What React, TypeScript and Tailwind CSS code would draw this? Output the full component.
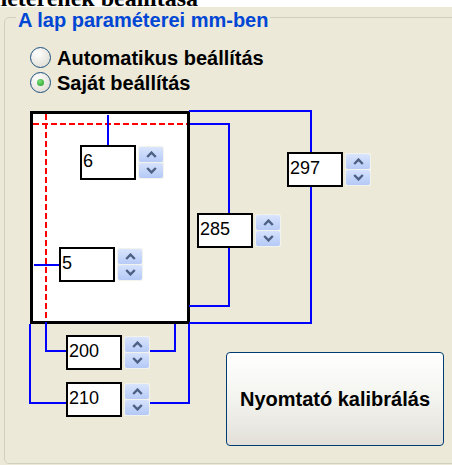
import React from 'react';

interface RadioProps {
  checked?: boolean;
  label: string;
}

const Radio = ({ checked, label }: RadioProps) => (
  <div className="flex h-[25px] items-center gap-[6px]">
    <div className="flex h-[21px] w-[21px] items-center justify-center rounded-full border-[1.5px] border-[#1c5180] bg-[radial-gradient(circle_at_35%_30%,#ffffff,#d9d6ca)]">
      {checked && (
        <div className="h-[7px] w-[7px] rounded-full bg-[radial-gradient(circle_at_40%_35%,#7be07b,#1e981e)]" />
      )}
    </div>
    <span className="text-[20px] font-bold leading-none text-black">{label}</span>
  </div>
);

const Arrow = ({ up }: { up?: boolean }) => (
  <svg width="11" height="7" viewBox="0 0 11 7">
    <path
      d={up ? 'M1.2 6 L5.5 1.6 L9.8 6' : 'M1.2 1 L5.5 5.4 L9.8 1'}
      fill="none"
      stroke="#4d6185"
      strokeWidth="2.4"
    />
  </svg>
);

// spin buttons next to each number field
const Spin = ({ className }: { className: string }) => (
  <div className={`absolute flex h-[33px] w-[26px] flex-col gap-px rounded-[2px] bg-[#f3f3ee] p-px ${className}`}>
    <div className="flex flex-1 items-center justify-center rounded-[2px] bg-linear-to-b from-[#dae5fd] to-[#b7cbf7]">
      <Arrow up />
    </div>
    <div className="flex flex-1 items-center justify-center rounded-[2px] bg-linear-to-b from-[#d6e2fd] to-[#b4c9f6]">
      <Arrow />
    </div>
  </div>
);

const NumBox = ({ value, className }: { value: string; className: string }) => (
  <div className={`absolute flex h-[35px] w-[56px] items-center border-2 border-black bg-white pb-[4px] pl-px text-[18px] leading-[20px] text-black ${className}`}>
    {value}
  </div>
);

export default function App() {
  return (
    <div className="relative h-[465px] w-[452px] overflow-hidden bg-[#ece9d8] font-['Liberation_Sans',Arial,sans-serif]">
      {/* heading, mostly scrolled out of view */}
      <div className="h-[7px] overflow-hidden bg-white">
        <div className="-mt-[14px] flex w-[198px] justify-end whitespace-nowrap font-['Liberation_Serif','Times_New_Roman',serif] text-[24px] font-bold leading-[24px] text-black">
          A lap paraméterenek beállítása
        </div>
      </div>

      <div className="relative ml-[4px] mt-[10px] h-[447px] w-[470px] rounded-[5px] border border-[#d0d0bf] pt-[27px]">
        <div className="absolute left-[11px] top-[-10px] bg-[#ece9d8] px-[2px] text-[20px] font-bold leading-[24px] text-[#0046d5]">
          A lap paraméterei mm-ben
        </div>

        <div className="flex flex-col pl-[25px]">
          <Radio label="Automatikus beállítás" />
          <Radio checked label="Saját beállítás" />
        </div>

        <div className="mt-[5px] grid">
          {/* paper diagram */}
          <div className="relative col-start-1 row-start-1 h-[330px] w-[380px]">
            <div className="absolute left-[25px] top-[11px] h-[213px] w-[160px] border-[3px] border-black bg-white" />
            <svg className="absolute left-0 top-0" width="380" height="330" viewBox="5 100 380 330">
              <g fill="none" stroke="#ff0000" strokeWidth="2" strokeDasharray="6 3">
                <path d="M33 124 H187" />
                <path d="M46 114 V321" />
              </g>
              <g fill="none" stroke="#0000ff" strokeWidth="2">
                <path d="M108 115 V145" />
                <path d="M34 265 H59" />
                <path d="M190 124 H229 V213" />
                <path d="M229 248 V306 H189" />
                <path d="M189 111 H311 V152" />
                <path d="M311 187 V323 H189" />
                <path d="M46 322 V351 H66" />
                <path d="M150 351 H175 V324" />
                <path d="M30 324 V403 H66" />
                <path d="M150 403 H189 V324" />
              </g>
            </svg>

            <NumBox value="6" className="left-[75px] top-[45px]" />
            <Spin className="left-[133px] top-[46px]" />

            <NumBox value="5" className="left-[54px] top-[147px]" />
            <Spin className="left-[112px] top-[148px]" />

            <NumBox value="285" className="left-[192px] top-[113px]" />
            <Spin className="left-[250px] top-[114px]" />

            <NumBox value="297" className="left-[282px] top-[52px]" />
            <Spin className="left-[340px] top-[53px]" />

            <NumBox value="200" className="left-[61px] top-[235px]" />
            <Spin className="left-[119px] top-[236px]" />

            <NumBox value="210" className="left-[61px] top-[282px]" />
            <Spin className="left-[119px] top-[283px]" />
          </div>

          <button className="col-start-1 row-start-1 ml-[221px] mt-[252px] flex h-[94px] w-[218px] items-center justify-center self-start justify-self-start rounded-[4px] border border-[#003c74] bg-linear-to-b from-[#ffffff] via-[#f3f3ef] to-[#e2e0d8] text-[20px] font-bold text-black">
            Nyomtató kalibrálás
          </button>
        </div>
      </div>
    </div>
  );
}
